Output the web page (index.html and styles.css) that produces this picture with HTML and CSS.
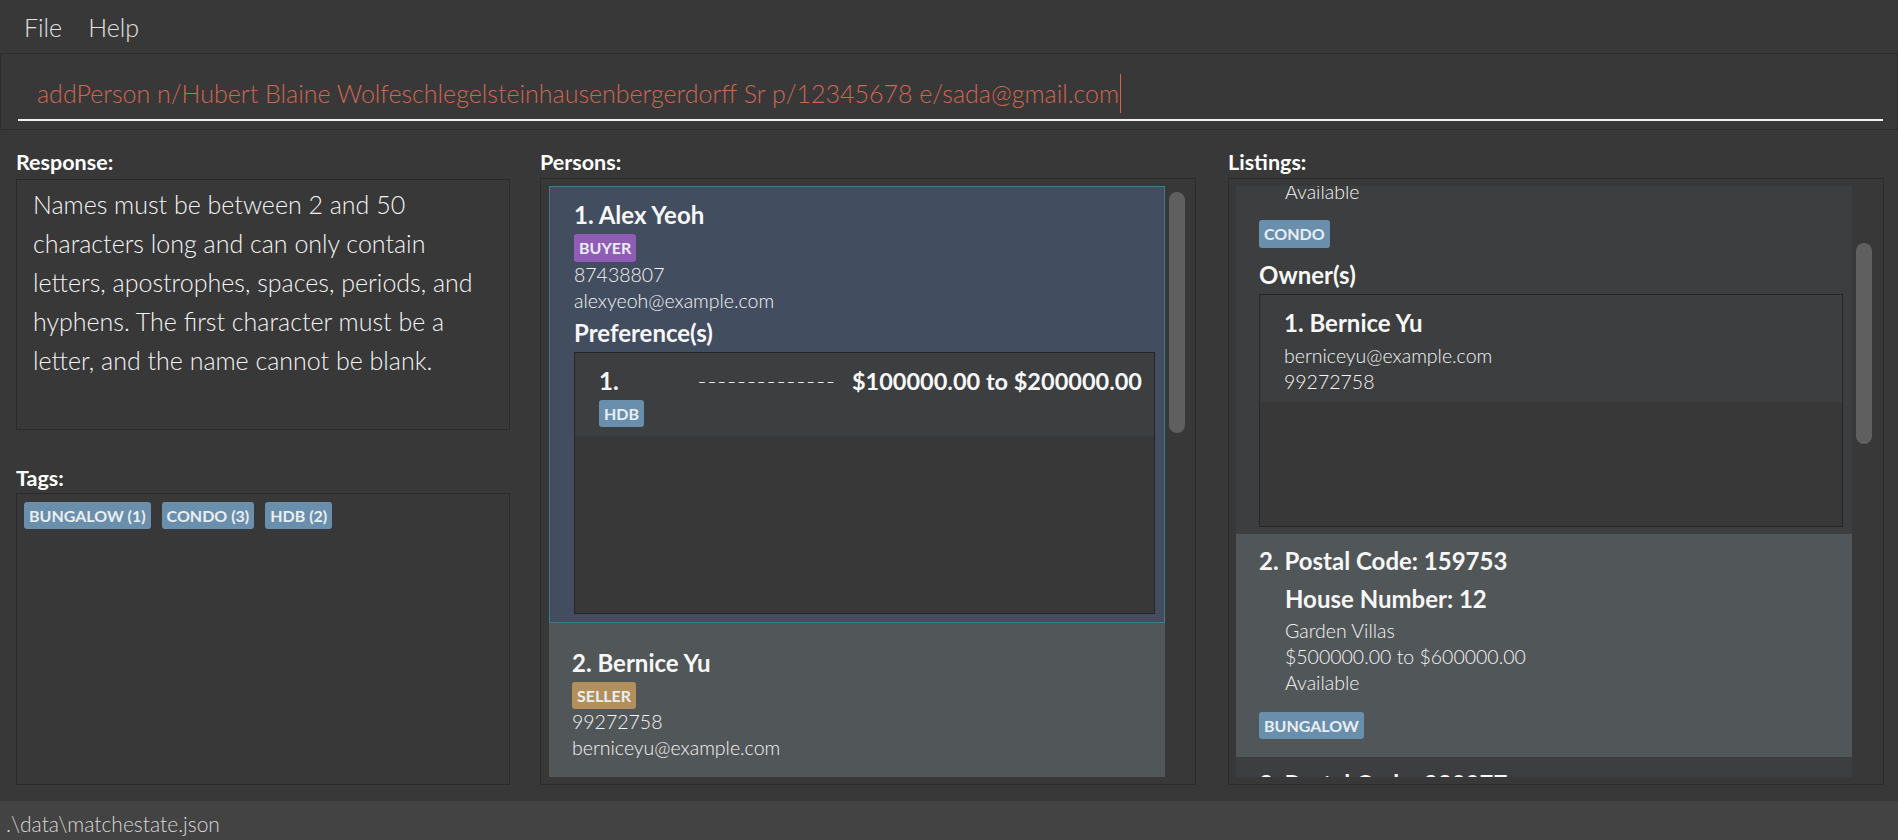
FILE: index.html
```html
<!DOCTYPE html>
<html lang="en">
<head>
<meta charset="utf-8">
<title>MatchEstate</title>
<link rel="stylesheet" href="styles.css">
</head>
<body>
<div class="app">
  <div class="menubar">
    <span class="menu-item">File</span>
    <span class="menu-item">Help</span>
  </div>

  <div class="command-pane">
    <div class="command-field">
      <span class="command-text">addPerson n/Hubert Blaine Wolfeschlegelsteinhausenbergerdorff Sr p/12345678 e/sada@gmail.com</span><span class="caret"></span>
    </div>
  </div>

  <div class="main">
    <div class="col col-left">
      <div class="header">Response:</div>
      <div class="response-box">Names must be between 2 and 50<br>characters long and can only contain<br>letters, apostrophes, spaces, periods, and<br>hyphens. The first character must be a<br>letter, and the name cannot be blank.</div>
      <div class="header tags-header">Tags:</div>
      <div class="tags-box">
        <span class="tag">BUNGALOW (1)</span>
        <span class="tag">CONDO (3)</span>
        <span class="tag">HDB (2)</span>
      </div>
    </div>

    <div class="col col-list">
      <div class="header">Persons:</div>
      <div class="list-box persons-box">
        <div class="viewport">
          <div class="card card-selected person-first">
            <div class="big">1. Alex Yeoh</div>
            <div class="tag-row"><span class="tag tag-buyer">BUYER</span></div>
            <div class="small">87438807</div>
            <div class="small">alexyeoh@example.com</div>
            <div class="big section-title">Preference(s)</div>
            <div class="sub-box pref-box">
              <div class="sub-card pref-card">
                <div class="pref-row">
                  <span class="big">1.</span>
                  <span class="pref-right"><span class="dashes">--------------</span><span class="big price">$100000.00 to $200000.00</span></span>
                </div>
                <div class="tag-row"><span class="tag">HDB</span></div>
              </div>
            </div>
          </div>
          <div class="card card-odd person-second">
            <div class="big">2. Bernice Yu</div>
            <div class="tag-row"><span class="tag tag-seller">SELLER</span></div>
            <div class="small">99272758</div>
            <div class="small">berniceyu@example.com</div>
          </div>
        </div>
        <div class="scroll-track"><div class="thumb thumb-persons"></div></div>
      </div>
    </div>

    <div class="col col-list col-right">
      <div class="header">Listings:</div>
      <div class="list-box listings-box">
        <div class="viewport">
          <div class="scrolled">
            <div class="card card-even listing-first">
              <div class="small indent">Available</div>
              <div class="tag-row listing-tags"><span class="tag">CONDO</span></div>
              <div class="big owners-title">Owner(s)</div>
              <div class="sub-box owners-box">
                <div class="sub-card owner-card">
                  <div class="big">1. Bernice Yu</div>
                  <div class="small owner-email">berniceyu@example.com</div>
                  <div class="small">99272758</div>
                </div>
              </div>
            </div>
            <div class="card card-odd listing-second">
              <div class="big">2. Postal Code: 159753</div>
              <div class="big indent house">House Number: 12</div>
              <div class="small indent details-first">Garden Villas</div>
              <div class="small indent">$500000.00 to $600000.00</div>
              <div class="small indent">Available</div>
              <div class="tag-row listing-tags2"><span class="tag">BUNGALOW</span></div>
            </div>
            <div class="card card-even listing-third">
              <div class="big">3. Postal Code: 230077</div>
            </div>
          </div>
        </div>
        <div class="scroll-track"><div class="thumb thumb-listings"></div></div>
      </div>
    </div>
  </div>

  <div class="status-bar">.\data\matchestate.json</div>
</div>
</body>
</html>
```

FILE: styles.css
```css
* {
  box-sizing: border-box;
  margin: 0;
  padding: 0;
}

html, body {
  width: 1898px;
  height: 840px;
  overflow: hidden;
  background: #383838;
}

body {
  font-family: "Lato", "Open Sans", "DejaVu Sans", sans-serif;
  color: #ffffff;
}

.app {
  display: flex;
  flex-direction: column;
  height: 840px;
}

/* ---------- menu ---------- */
.menubar {
  height: 54px;
  flex: none;
  display: flex;
  align-items: center;
  gap: 26px;
  padding-left: 24px;
  border-bottom: 1px solid #2d2d2d;
  font-size: 25px;
  font-weight: 300;
  color: #e2e2e2;
}

/* ---------- command box ---------- */
.command-pane {
  height: 76px;
  flex: none;
  padding-top: 22px;
  border-left: 1px solid #2d2d2d;
  border-right: 1px solid #2d2d2d;
  border-bottom: 1px solid #2d2d2d;
}

.command-field {
  margin-left: 17px;
  margin-right: 14px;
  padding-left: 19px;
  padding-bottom: 9px;
  border-bottom: 2px solid #f0f0f0;
  display: flex;
  align-items: center;
  height: 45px;
}

.command-text {
  font-size: 25px;
  font-weight: 300;
  line-height: 32px;
  color: #d06651;
  white-space: nowrap;
}

.caret {
  display: block;
  width: 0;
  height: 39px;
  border-left: 1.5px solid #d06651;
  margin-left: 1px;
}

/* ---------- main area ---------- */
.main {
  flex: 1;
  display: flex;
  padding: 20px 14px 0 16px;
  gap: 30px;
}

.col {
  display: flex;
  flex-direction: column;
}

.col-left {
  width: 494px;
}

.col-list {
  width: 656px;
}

.col-right {
  margin-left: 2px;
}

.header {
  font-size: 21.5px;
  font-weight: 700;
  line-height: 24px;
  height: 24px;
  color: #ffffff;
}

.response-box {
  margin-top: 5px;
  height: 251px;
  border: 1px solid #2a2a2a;
  padding: 5px 10px 0 16px;
  font-size: 25px;
  font-weight: 300;
  line-height: 39px;
  color: #f4f4f4;
  white-space: nowrap;
}

.tags-header {
  margin-top: 36px;
}

.tags-box {
  margin-top: 3px;
  height: 292px;
  border: 1px solid #2a2a2a;
  padding: 8px 7px;
  display: flex;
  align-items: flex-start;
  gap: 11px;
}

/* ---------- tags ---------- */
.tag {
  display: inline-block;
  height: 27px;
  line-height: 27px;
  padding: 0 5px;
  border-radius: 3px;
  background: #6a8fad;
  color: #e9eef2;
  font-size: 16px;
  font-weight: 700;
  white-space: nowrap;
}

.tag-buyer {
  background: #8f5cb6;
  height: 28px;
  line-height: 28px;
}

.tag-seller {
  background: #b38f5c;
}

.tag-row {
  display: flex;
  margin-top: 3px;
}

/* ---------- lists ---------- */
.list-box {
  margin-top: 4px;
  height: 607px;
  border: 1px solid #2b2b2b;
  display: flex;
  padding: 7px 10px 7px 8px;
}

.listings-box {
  padding: 7px 11px 7px 7px;
}

.viewport {
  width: 616px;
  height: 591px;
  overflow: hidden;
  flex: none;
}

.scrolled {
  margin-top: -7px;
}

.scroll-track {
  width: 16px;
  margin-left: 4px;
  flex: none;
}

.thumb {
  width: 16px;
  border-radius: 8px;
  background: #5f5f5f;
}

.thumb-persons {
  margin-top: 6px;
  height: 241px;
}

.thumb-listings {
  margin-top: 57px;
  height: 201px;
}

.card {
  width: 616px;
}

.card-selected {
  background: #424d5f;
  border: 1px solid #3e7b91;
}

.card-odd {
  background: #515658;
}

.card-even {
  background: #3c3e3f;
}

.big {
  font-size: 24px;
  font-weight: 700;
  line-height: 32px;
  color: #f7f7f7;
  white-space: nowrap;
}

.small {
  font-size: 19.5px;
  font-weight: 300;
  line-height: 26px;
  color: #f4f4f4;
  white-space: nowrap;
}

.indent {
  margin-left: 26px;
}

/* persons */
.person-first {
  padding: 12px 9px 8px 24px;
}

.section-title {
  margin-top: 3px;
}

.sub-box {
  border: 1px solid #262626;
  background: #383838;
}

.pref-box {
  margin-top: 3px;
  height: 262px;
}

.pref-card {
  background: #3c3e3f;
  padding: 12px 12px 9px 24px;
}

.pref-row {
  display: flex;
  justify-content: space-between;
  align-items: center;
}

.pref-right {
  display: flex;
  align-items: center;
  gap: 16px;
}

.price {
  font-size: 23.5px;
}

.dashes {
  font-size: 24px;
  font-weight: 300;
  line-height: 32px;
  letter-spacing: 1px;
  color: #e8e8e8;
}

.person-second {
  padding: 24px 9px 20px 23px;
}

/* listings */
.listing-first {
  padding: 0 9px 7px 23px;
}

.listing-tags {
  margin-top: 15px;
}

.listing-tags .tag {
  height: 28px;
  line-height: 28px;
}

.owners-title {
  margin-top: 11px;
}

.owners-box {
  margin-top: 3px;
  height: 233px;
}

.owner-card {
  background: #3c3e3f;
  padding: 12px 12px 7px 24px;
}

.owner-email {
  margin-top: 4px;
}

.listing-second {
  padding: 11px 9px 18px 23px;
}

.house {
  margin-top: 6px;
}

.details-first {
  margin-top: 3px;
}

.listing-tags2 {
  margin-top: 16px;
}

.listing-third {
  padding: 11px 9px 20px 23px;
}

/* ---------- status bar ---------- */
.status-bar {
  height: 39px;
  flex: none;
  background: #434343;
  padding: 6px 0 0 6px;
  font-size: 21px;
  font-weight: 300;
  line-height: 33px;
  color: #d8d8d8;
  white-space: nowrap;
}
```
